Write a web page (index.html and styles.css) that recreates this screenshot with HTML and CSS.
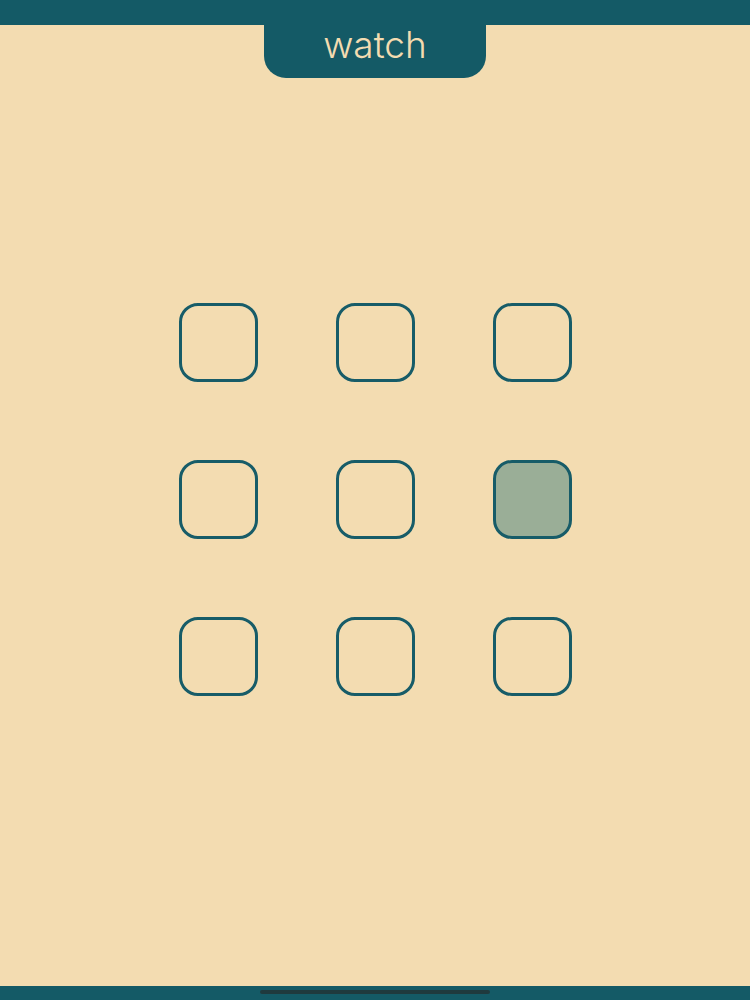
FILE: index.html
```html
<!DOCTYPE html>
<html>
<head>
<meta charset="utf-8">
<link rel="stylesheet" href="styles.css">
</head>
<body>
<div class="page">
  <header class="header">
    <div class="topbar"></div>
    <div class="tab">watch</div>
  </header>
  <main class="main">
    <div class="grid">
      <div class="cell"></div>
      <div class="cell"></div>
      <div class="cell"></div>
      <div class="cell"></div>
      <div class="cell"></div>
      <div class="cell active"></div>
      <div class="cell"></div>
      <div class="cell"></div>
      <div class="cell"></div>
    </div>
  </main>
  <footer class="footer">
    <div class="home-indicator"></div>
  </footer>
</div>
</body>
</html>
```
FILE: styles.css
```css
html, body {
  margin: 0;
  padding: 0;
}
body {
  background: #f3dcb1;
  font-family: "Liberation Sans", Arial, sans-serif;
}
.page {
  height: 1000px;
  display: flex;
  flex-direction: column;
}
.header {
  display: flex;
  flex-direction: column;
  align-items: center;
}
.topbar {
  width: 100%;
  height: 25px;
  background: #145a66;
}
.tab {
  width: 222px;
  height: 54px;
  background: #145a66;
  border-radius: 0 0 22px 22px;
  color: #f3dcb1;
  font-family: Inter, "Open Sans", sans-serif;
  font-weight: 300;
  font-size: 37px;
  line-height: 42px;
  text-align: center;
  margin-top: -1px;
}
.main {
  flex: 1;
  display: flex;
  justify-content: center;
  align-items: flex-start;
  padding-top: 225px;
}
.grid {
  display: grid;
  grid-template-columns: repeat(3, 79px);
  grid-auto-rows: 79px;
  gap: 78px;
}
.cell {
  box-sizing: border-box;
  border: 3px solid #175c68;
  border-radius: 19px;
}
.cell.active {
  background: #9aae97;
}
.footer {
  height: 14px;
  background: #145a66;
  display: flex;
  justify-content: center;
  padding-top: 4px;
  box-sizing: border-box;
}
.home-indicator {
  width: 230px;
  height: 4px;
  border-radius: 2px;
  background: #1f3a3e;
}
```
